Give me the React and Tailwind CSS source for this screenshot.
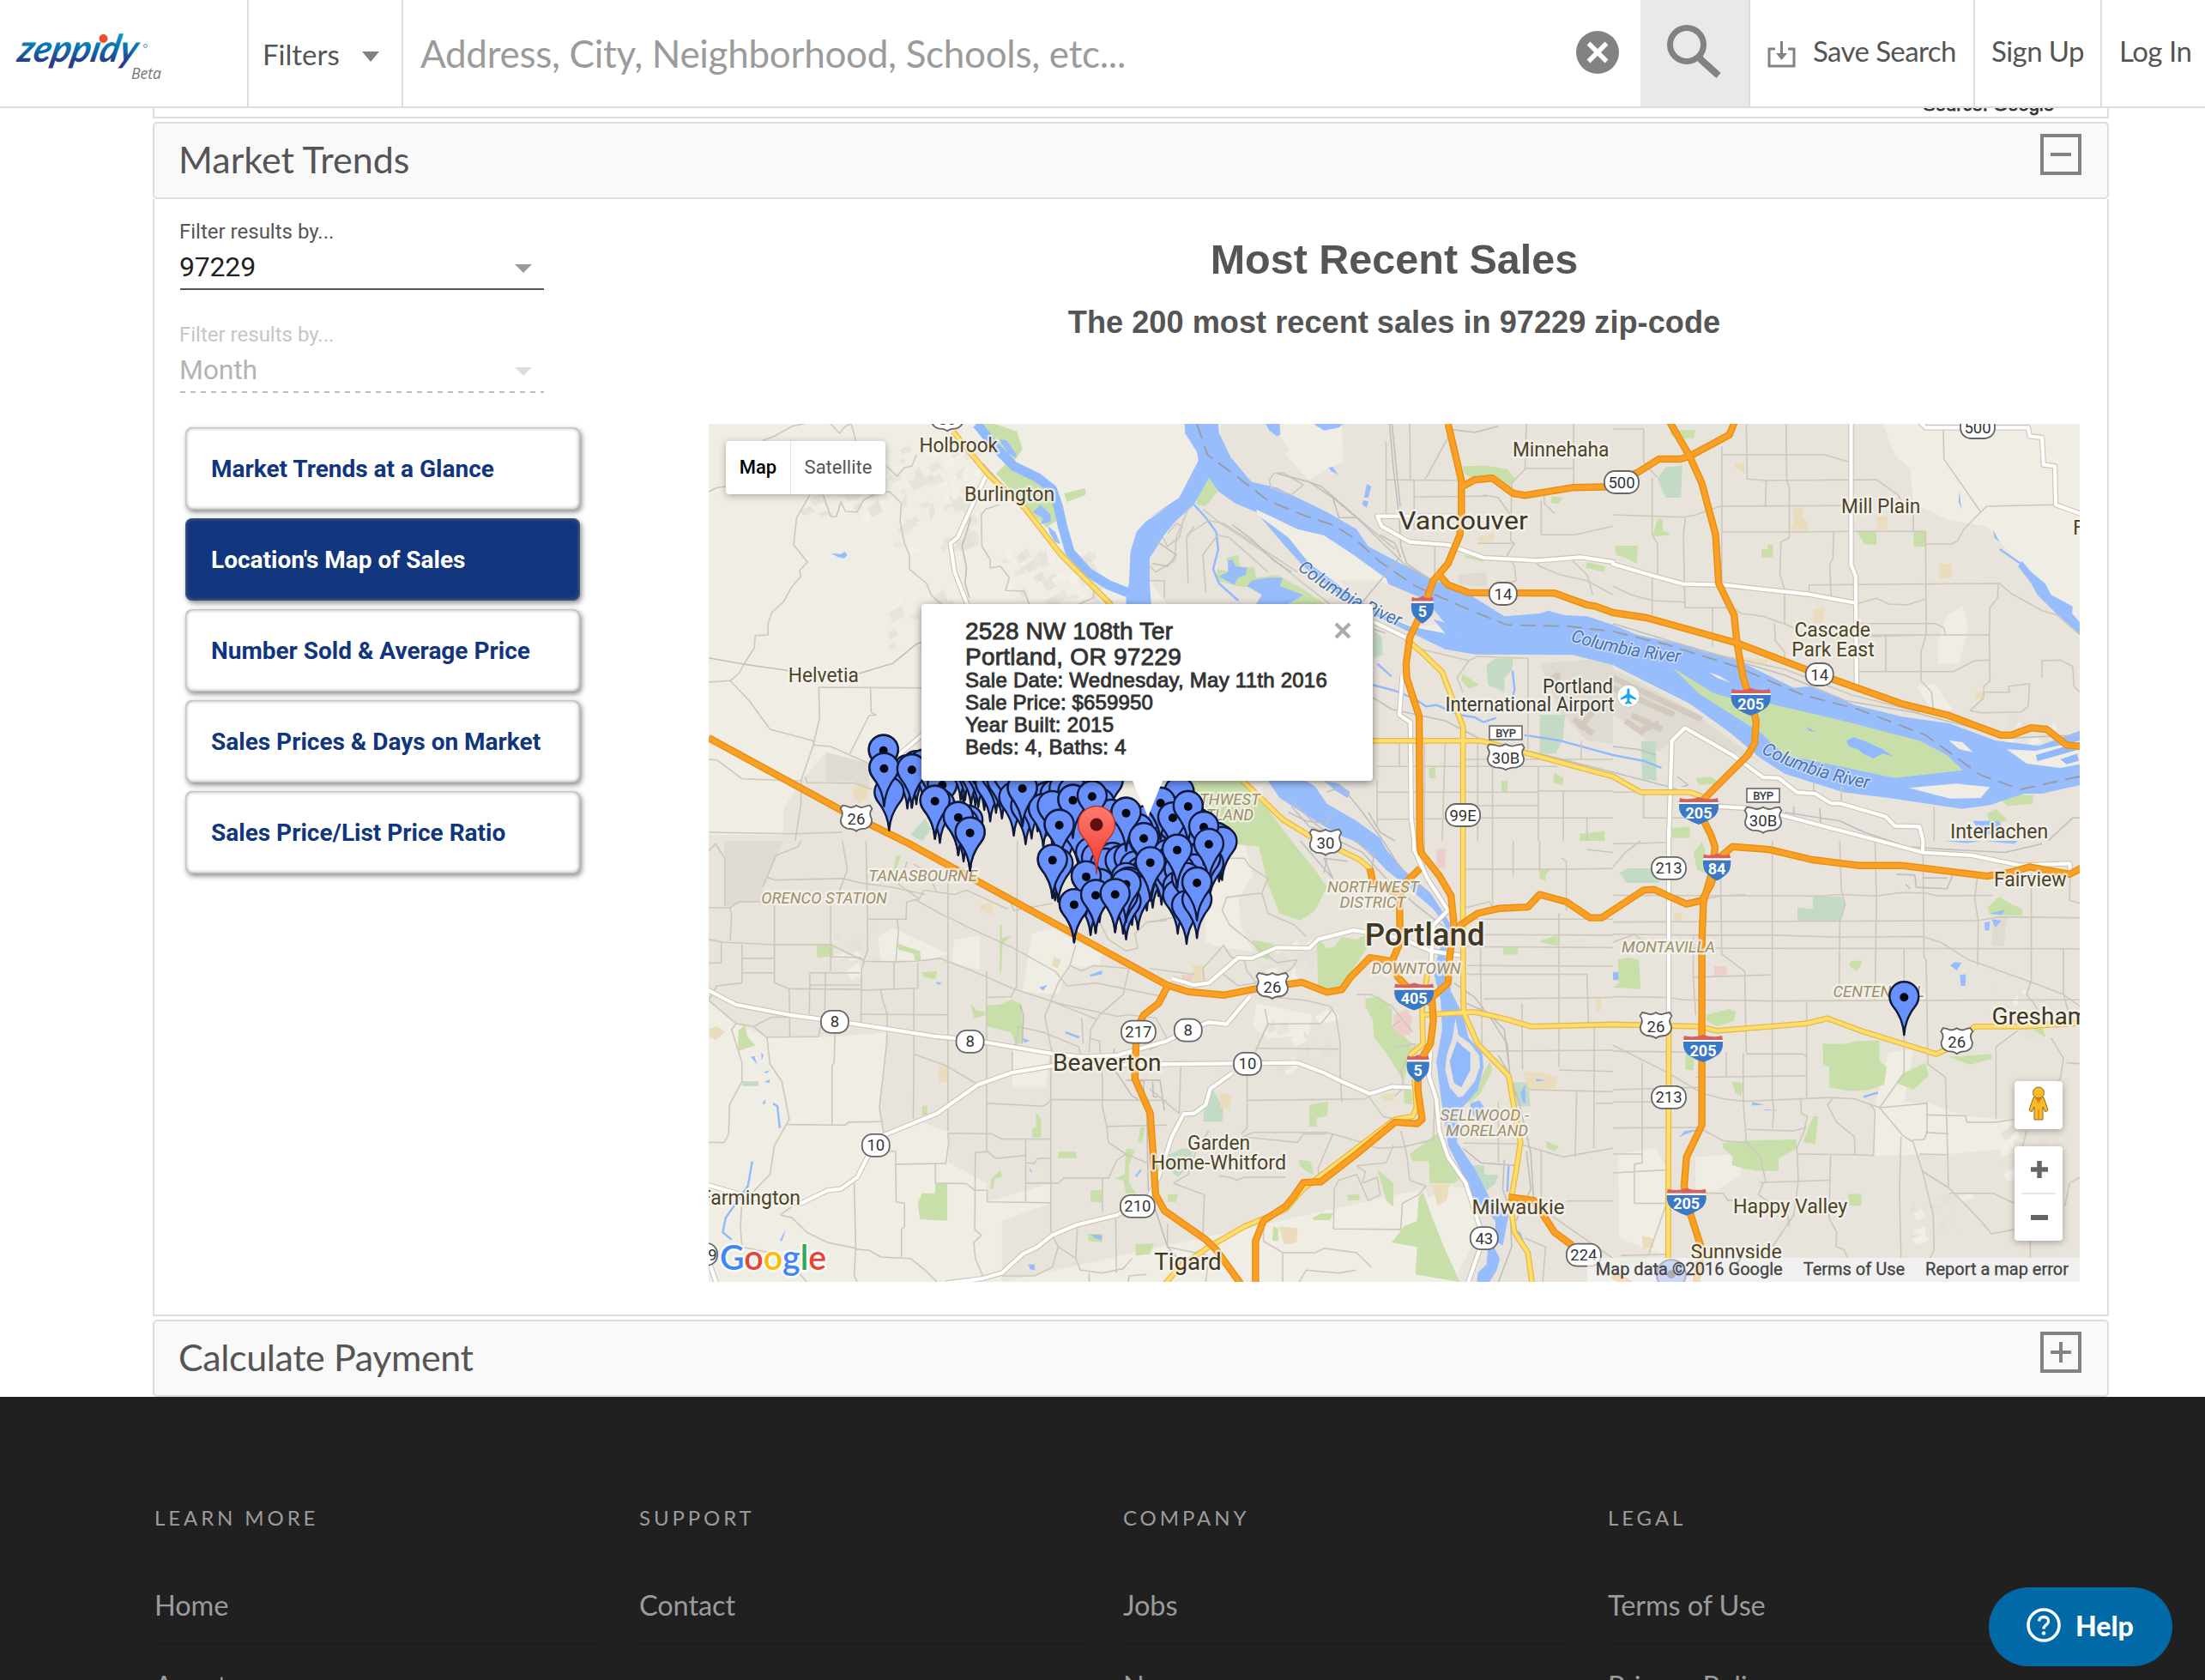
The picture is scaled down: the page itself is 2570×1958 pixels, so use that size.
import React from "react";

/* ---------- Map geometry ----------
   Map features are digitised on six survey sheets (A–C north row, D–F south row).
   Each sheet has its own origin and scale; "A 10,20 30,40" is a run on sheet A. */
const SHEETS = {
  A: [-6, -14, 2.9037, 3],
  B: [514, -14, 2.9037, 3],
  C: [1054, -14, 2.8, 3],
  D: [-6, 486, 2.9037, 2.9585],
  E: [514, 486, 2.9037, 2.9585],
  F: [1054, 486, 2.8, 2.9585],
};
const at = (s, x, y) => {
  const [ox, oy, sx, sy] = SHEETS[s];
  return [+(ox + x / sx).toFixed(1), +(oy + y / sy).toFixed(1)];
};
const pts = (str) => {
  let s = "A";
  const out = [];
  for (const t of str.trim().split(/\s+/)) {
    if (SHEETS[t]) s = t;
    else {
      const [x, y] = t.split(",").map(Number);
      out.push(at(s, x, y).join(","));
    }
  }
  return out.join(" ");
};

const URBAN = [
  "B 240,42 410,42 470,130 560,200 650,170 650,42 C 880,42 920,150 970,200 980,320 1100,380 1220,400 1300,500 1400,640 1523,790 F 1523,1521 E 1050,1521 990,1350 930,1200 D 1010,1521 1010,1310 1175,1250 1175,1180 960,1245 960,1180 830,1110 830,1005 710,960 610,1010 595,920 620,660 440,675 215,675 110,630 17,550 17,0 A 17,1480 270,1480 270,1390 330,1290 415,1190 560,1230 B 180,1500 400,1300 A 1440,1290 1568,672 1510,590 B 0,510 90,380 150,320 230,280",
];
const RURAL = [
  "E 185,0 320,10 350,120 300,200 310,300 350,380 250,370 190,350",
  "E 360,560 550,600 540,670 400,680 350,640",
  "D 1110,320 1180,300 1260,350 1350,380 1340,430 1230,440 1200,530 1080,520",
  "D 590,330 640,300 830,390 720,420 600,415",
  "D 850,340 935,325 935,445 840,420",
  "D 1045,700 1170,735 1160,850 1045,850",
  "E 1010,1190 1070,1200 1110,1320 1080,1420 1040,1500 960,1380 930,1240",
  "F 900,730 980,720 950,900 1020,905 1090,1010 1090,1080 850,1085 850,930",
  "F 1020,900 1150,950 1300,960 1310,1060 1100,1080",
  "F 17,1080 140,1060 170,1120 170,1430 20,1370",
  "F 270,1090 400,1080 420,1150 330,1210 270,1200",
  "C 1090,710 1140,680 1160,750 1130,880 1060,880 1060,800",
  "C 990,960 1050,950 1110,1040 1050,1060",
  "B 460,150 560,42 650,42 655,175 590,205 540,240",
];
const SHADE = [
  "D 70,0 270,0 200,160 200,205 75,225",
  "A 415,1190 560,1230 560,1320 500,1290 415,1295",
  "C 0,900 60,930 250,1040 400,1160 480,1220 390,1190 235,1105 150,1190 60,1100 0,1060",
  "B 1320,880 1568,860 1568,1160 1480,1150 1390,1050",
  "B 1040,570 1140,560 1140,610 1050,605",
  "F 1240,270 1285,265 1275,365 1235,360",
];
const PARKS = [
  "A 935,42 985,42 1060,68 1080,130 1040,190 1150,235 1185,270 1195,380 1160,405 1090,330 990,215 1040,165 985,100",
  "A 1220,285 1293,267 1293,290 1230,315",
  "B 200,228 232,275 190,330 158,325 165,260",
  "B 258,510 300,500 305,540 355,545 360,580 430,570 520,620 595,672 480,672 400,620 300,610 225,590 230,550 275,560",
  "B 1060,190 1140,188 1210,200 1238,235 1215,265 1160,235 1100,240 1065,215",
  "B 1360,295 1398,300 1380,322 1358,318",
  "B 1480,525 1540,540 1540,560 1475,545",
  "B 1060,500 1130,515 1130,525 1070,510",
  "B 1058,915 1115,955 1080,968 1055,940",
  "B 945,1245 967,1242 967,1282 947,1280",
  "B 1370,1260 1400,1280 1400,1305 1365,1295",
  "B 1190,1290 1212,1290 1210,1330 1190,1328",
  "B 1455,1475 1540,1465 1540,1500 1455,1500",
  "B 100,1290 310,1290 400,1390 480,1500 E 560,100 600,160 560,240 510,275 440,250 400,150 370,20 B 180,1500 180,1400",
  "C 185,65 268,63 265,90 230,95 190,85",
  "C 145,375 162,375 162,415 185,425 180,432 130,435",
  "C 5,468 80,468 78,530 40,510 10,500",
  "C 505,465 522,465 522,508 485,510 485,480 505,480",
  "C 797,420 860,418 860,465 820,462",
  "C 980,420 1020,418 1020,470 982,472",
  "C 1260,1355 1300,1338 1372,1340 1368,1370 1290,1378",
  "C 1220,1405 1250,1388 1290,1430 1230,1440",
  "C 190,1455 250,1450 250,1490 195,1490",
  "C 270,1280 320,1275 350,1300 280,1305",
  "D 383,360 440,357 438,398 385,402",
  "D 655,352 680,362 733,380 735,412 715,412 712,390 660,375",
  "D 1003,290 1010,290 1010,335 1045,325 1012,355 1008,450 1002,450",
  "D 958,565 1000,565 1045,547 1078,565 1080,690 1060,705 1040,660 958,640",
  "D 905,563 925,585 955,590 950,603 915,612",
  "D 118,655 140,635 148,675 175,705 117,725",
  "D 740,453 790,450 785,478 745,470",
  "D 785,1183 825,1183 825,1310 732,1305 725,1250 740,1215 783,1215",
  "D 740,913 757,913 757,945 740,945",
  "D 1113,990 1125,985 1125,935 1143,960 1143,1022 1113,1022",
  "D 1200,1072 1262,1072 1262,1094 1200,1094",
  "D 1310,1205 1348,1205 1348,1247 1310,1245",
  "D 1300,1355 1350,1355 1350,1385 1305,1380",
  "D 1462,1390 1525,1388 1510,1425 1462,1430",
  "D 1430,1060 1460,1065 1440,1120 1440,1180 1465,1215 1430,1215 1420,1170 1390,1165 1425,1150",
  "D 1478,988 1495,985 1485,1040 1470,1040",
  "D 975,1165 1005,1135 1010,1160 985,1165 980,1200 970,1200",
  "D 650,50 668,50 655,90 635,120 648,80",
  "E 565,330 600,370 625,365 650,330 700,340 740,320 735,370 690,440 650,505 570,512",
  "E 730,545 775,535 820,580 820,640 890,700 880,740 860,830 800,730 760,680 755,620 730,570",
  "E 540,910 605,900 600,950 565,955 565,985 540,985",
  "E 880,1080 985,1000 1010,1080 1065,1150 1030,1180 948,1180 945,1105 890,1105",
  "E 770,1130 825,1180 825,1262 800,1240",
  "E 925,1210 960,1310 1000,1410 1050,1521 900,1495 905,1400 820,1385 860,1330 905,1310 910,1230",
  "E 1150,760 1160,790 1120,870 1090,900 1060,905 1110,840",
  "E 550,1300 580,1285 622,1285 610,1308 555,1308",
  "E 670,1220 710,1218 710,1240 672,1240",
  "E 505,1100 545,1105 555,1152 530,1140 508,1120",
  "E 1320,100 1360,97 1340,115 1340,138 1320,130",
  "E 1320,345 1380,325 1382,362 1330,352",
  "E 1195,368 1247,370 1245,392 1197,392",
  "E 1340,1035 1385,1055 1370,1070 1345,1060",
  "E 345,342 420,355 400,410 375,400",
  "E 418,1330 435,1335 435,1380 415,1378",
  "E 60,1220 95,1218 90,1245 62,1245",
  "E 860,860 885,855 890,910 862,905",
  "F 15,410 50,402 85,410 90,512 0,505 20,490",
  "F 305,600 380,580 402,590 395,620 340,640 305,620",
  "F 685,700 760,700 800,690 870,688 870,760 893,780 885,840 830,860 768,862 706,850 706,780 686,770",
  "F 950,800 1020,765 1030,810 980,858 925,835",
  "F 1095,745 1235,735 1235,752 1165,772",
  "F 388,830 425,835 418,880 400,870",
  "F 437,1033 598,1030 600,1060 540,1095 540,1138 478,1138 430,1130 388,1118 390,1090 360,1060 358,1042",
  "F 655,950 670,950 660,1045 620,1040 640,980",
  "F 768,1217 810,1217 810,1258 770,1258",
  "F 1222,230 1260,192 1295,215 1335,235 1335,258 1230,255",
  "F 775,415 810,412 810,430 795,450 772,430",
  "F 1370,650 1400,635 1412,678",
  "F 237,730 265,750 262,790 237,790",
  "F 262,40 290,5 300,30 300,110 275,100",
  "F 0,1445 90,1440 125,1460 30,1460",
];
const GREEN2 = [
  "C 145,235 170,195 226,187 222,300 172,300",
  "B 1140,885 1170,862 1230,862 1225,905 1200,930 1200,980 1145,955",
  "B 1320,1060 1405,1060 1400,1140 1375,1195 1320,1195",
  "B 756,765 785,785 790,850 758,860",
  "C 92,1150 140,1155 142,1290 95,1285",
  "D 132,828 187,830 185,846 130,845",
  "E 215,858 250,925 245,968 180,968 185,925",
  "E 60,1085 110,1060 145,1065 140,1120 95,1158 60,1130",
  "E 1230,830 1282,835 1288,915 1232,915",
  "E 1082,1120 1130,1118 1135,1150 1180,1152 1170,1182 1135,1210 1110,1200",
  "F 652,192 748,192 758,220 742,276 602,276 602,230 652,235",
  "F 20,110 48,95 148,95 150,145 45,145",
  "A 750,1420 770,1460 740,1500 700,1480",
];
const PATCHES = [
  ["#e9ddbe", "A 505,1310 558,1305 555,1345 530,1372 505,1345"],
  ["#e9ddbe", "D 17,650 45,638 73,660 40,688 20,675"],
  ["#e9ddbe", "D 935,218 982,215 975,255 938,240"],
  ["#e9ddbe", "D 1185,400 1210,408 1200,440 1178,430"],
  ["#e9ddbe", "D 793,780 825,778 825,832 797,830"],
  ["#e9ddbe", "C 587,332 620,330 620,370 637,385 635,415 578,415 590,385"],
  ["#e9ddbe", "C 862,366 895,366 895,412 862,412"],
  ["#e9ddbe", "C 1064,532 1105,530 1105,583 1065,583"],
  ["#e9ddbe", "C 652,692 692,680 685,735 652,740"],
  ["#e9ddbe", "C 398,180 430,178 430,215 398,195"],
  ["#e9ddbe", "C 1180,980 1207,977 1210,1003 1182,1005"],
  ["#e9ddbe", "C 420,860 510,865 500,885 450,880"],
  ["#e9ddbe", "E 145,430 186,428 186,485 147,485"],
  ["#e9ddbe", "E 235,868 277,875 270,930 240,920"],
  ["#e9ddbe", "E 787,875 828,872 828,895 787,897"],
  ["#e9ddbe", "E 1262,795 1320,797 1378,815 1375,855 1285,858"],
  ["#e9ddbe", "E 438,1330 500,1335 498,1385 455,1392"],
  ["#e9ddbe", "E 955,1185 1015,1183 1005,1240 975,1260"],
  ["#e9ddbe", "E 1508,545 1528,542 1528,585 1510,587"],
  ["#e9ddbe", "F 197,247 225,247 225,276 197,276"],
  ["#e9ddbe", "F 95,1360 133,1372 130,1402 97,1405"],
  ["#e9ddbe", "B 1110,440 1168,420 1165,450 1120,460"],
  ["#eccfcb", "E 825,600 870,580 890,610 880,670 850,672 825,640"],
  ["#eccfcb", "E 970,30 1002,25 1000,98 972,90"],
  ["#eccfcb", "E 107,462 148,460 145,485 110,480"],
  ["#eccfcb", "F 330,432 368,432 375,460 330,465"],
];
const WATER = [
  "B 232,42 235,75 275,160 345,245 430,265 600,350 700,410 740,470 830,520 960,590 1050,610 1100,650 1200,715 1320,705 1350,695 1400,710 1480,715 1568,745 C 80,780 250,820 400,865 590,965 640,960 700,985 790,1025 940,1065 1100,1090 1250,1150 1390,1168 1523,1115 1523,1305 1400,1335 1340,1335 1230,1375 1140,1388 900,1350 750,1330 560,1265 480,1210 380,1120 250,1020 120,950 0,885 B 1430,850 1100,848 1000,830 900,780 760,710 640,640 520,540 450,460 360,350 290,320 235,280 200,230 150,325 90,380 50,430 20,480 0,510 A 1510,600 1515,672 1430,672 1430,640 1440,600 1445,490 1465,420 1495,385 1568,335 B 0,370 100,300 165,170 160,140 120,75 118,42",
  "B 400,1290 440,1350 530,1410 640,1480 E 690,0 740,35 800,100 880,165 960,235 1000,290 980,380 960,450 985,550 990,650 970,760 985,880 1000,980 1010,1050 1050,1130 1100,1240 1170,1310 1170,1380 1195,1395 1215,1290 1150,1230 1100,1130 1040,1040 1050,930 1110,860 1130,780 1125,730 1080,680 1060,600 1020,520 1000,400 1020,290 950,180 860,100 800,30 B 780,1490 700,1430 600,1370 560,1310 530,1290",
  "E 1165,1400 1185,1440 1175,1480 1150,1521 1108,1521 1110,1490 1140,1460 1145,1400",
  "A 432,495 465,497 478,488 487,502 475,512 455,508",
  "A 1115,350 1140,325 1175,360 1175,385 1140,392 1150,372",
  "A 1165,400 1190,420 1208,462 1190,455 1172,425",
  "A 1000,95 1025,100 1060,150 1055,160 1030,145",
  "B 392,42 440,42 442,80 430,85 405,65",
  "B 555,42 655,42 640,55 590,65",
  "B 735,252 750,262 740,300 725,300",
  "B 722,310 740,312 735,335 720,325",
  "B 265,520 280,515 290,540 330,545 325,570 300,580 285,605 260,590 235,575 265,560",
  "B 345,590 400,580 450,580 440,610 520,640 470,672 360,672 380,640 330,610",
  "B 605,195 620,192 638,220 615,208",
  "B 590,1290 640,1300 678,1330 670,1350 630,1325",
  "C 1322,540 1335,522 1365,560 1410,600 1430,640 1500,680 1498,705 1523,735 1523,778 1470,730 1385,640 1365,600",
  "C 1240,412 1262,455 1245,440",
  "C 1130,275 1137,340 1128,315",
  "C 1175,1430 1260,1430 1280,1470 1200,1480",
  "F 1100,430 1115,418 1138,420 1122,447",
  "F 1132,462 1152,460 1150,500 1135,500",
  "F 1230,250 1278,238 1270,255",
  "F 1212,282 1230,278 1228,308 1214,310",
  "F 1235,270 1268,275 1248,298",
  "F 0,452 18,452 18,480 0,480",
  "F 453,900 492,910 455,913",
  "F 488,925 540,930 500,930",
  "F 215,1022 235,1000 285,995 240,1010",
  "F 1080,0 1200,0 1155,8",
  "F 1210,0 1320,0 1310,10",
  "D 1136,505 1163,497 1150,517",
  "D 1307,462 1350,447 1348,460 1310,468",
  "D 785,487 808,488 795,497",
  "D 160,745 172,742 182,772",
  "D 195,730 203,740 197,757",
  "D 203,798 225,790 215,802",
  "D 205,832 225,822 222,834",
  "D 198,905 210,890 208,908",
  "D 258,1378 277,1340 272,1360 265,1382",
  "D 1460,1155 1482,1128 1480,1140 1465,1160",
  "D 1310,1357 1350,1360 1345,1377 1325,1370",
  "D 1100,1460 1120,1460 1122,1480 1105,1478",
  "D 1080,680 1105,690 1085,695",
  "D 1103,1125 1113,1145 1105,1140",
  "E 1085,905 1115,895 1130,915 1120,970 1085,935",
  "E 1255,870 1270,840 1272,905 1262,900",
  "E 1307,820 1340,825 1310,830",
  "E 1238,1340 1255,1350 1268,1385 1250,1370",
];
const ISLANDS = [
  ["#f0ede4", "B 362,342 430,375 500,410 590,432 690,500 800,582 810,610 870,632 930,655 1000,740 1055,770 1000,775 880,750 800,715 700,655 620,590 540,530 470,440 362,358"],
  ["#e8e4dc", "B 640,590 780,590 930,655 1000,740 900,752 800,712 700,655"],
  ["#97bdfd", "B 960,725 1050,752 1055,800 1080,775 1160,812 1040,818 1000,775"],
  ["#c9dfaa", "C 195,895 330,985 420,1010 510,1020 750,1080 1000,1150 1090,1200 1142,1253 920,1280 740,1240 560,1200 480,1120 420,1080 280,985"],
  ["#f0ede4", "C 965,1315 1120,1300 1230,1312 1200,1350 1100,1352"],
  ["#f0ede4", "C 1095,1148 1140,1155 1175,1190 1130,1180"],
  ["#f0ede4", "C 1285,1180 1380,1185 1523,1150 1523,1232 1460,1245 1350,1230"],
  ["#f0ede4", "C 312,910 350,925 385,948 340,930"],
  ["#e8e4dc", "E 1035,612 1045,670 1065,685 1085,700 1115,740 1118,780 1100,830 1060,880 1045,885 1015,850 1000,790 1005,740 1025,680"],
  ["#91b9fe", "E 1040,690 1060,710 1085,730 1085,790 1055,850 1030,835 1015,760"],
  ["#91b9fe", "C 762,1150 785,1137 830,1155 880,1180 915,1205 880,1195 850,1212 815,1195 800,1180 770,1170"],
  ["#91b9fe", "C 630,1102 665,1120 640,1115"],
  ["#91b9fe", "C 1380,1200 1523,1155 1523,1180 1385,1222"],
  ["#91b9fe", "C 1460,1215 1515,1195 1520,1220 1480,1232"],
];
const STREAMS = [
  "A 925,42 985,120 1050,190 1130,230 1180,270 1200,330 1215,400 1240,490 1300,560 1370,605 1435,632",
];
const CREEKS = [
  "B 150,325 190,370 225,420 232,480 215,550 235,600 300,660",
  "B 756,955 830,975 900,1005 935,1030 970,1025 1050,1060 1100,1068 1130,1085 1172,1070",
  "B 1228,905 1235,970 1225,1010 1200,1022",
  "B 1268,1130 1390,1150 1568,1200 C 100,1220 158,1245",
  "B 770,880 818,925",
  "D 235,905 250,915 258,990",
  "D 165,1105 150,1190 75,1300 65,1350 95,1375",
  "D 1225,660 1272,678",
  "C 1262,480 1330,530",
  "E 1215,1120 1210,1210",
  "F 818,883 865,868",
];

const ORANGE = [
  "A 17,1140 470,1395 690,1507 D 1568,497 E 130,520 250,532 360,510 515,488 600,522 650,513 680,470 745,403 820,415",
  "B 1010,42 1030,130 1055,240 1055,360 1050,430 1010,530 960,590 925,690 880,790 868,880 870,930 912,1065 914,1500 E 918,40 980,120 1020,190 1030,290 1015,400 1010,490 955,540 960,620 950,700 908,770 908,860 922,960 905,975 830,970 700,1080 580,1175 520,1178 485,1230 460,1260 385,1310 358,1380 358,1530",
  "D 1568,505 1540,560 1490,600 1465,650 1460,820 1512,940 1520,1060 1530,1220 1560,1275 E 190,1375 225,1410 310,1530",
  "E 915,95 860,150 845,200 848,350 820,415 840,470 895,530 955,560",
  "E 745,95 755,140 845,185",
  "E 1045,295 1110,250 1180,233 1280,228 1320,185 1410,210 1490,265 1530,265 F 0,240 100,170 135,168 180,190 240,218 290,205 320,150 345,60 390,20 510,30 650,65 800,85 940,85 1060,100 1220,122 1290,110 1360,90 1490,115 1530,93",
  "C 185,35 250,155 290,250 335,430 345,600 395,710 405,810 425,930 450,1010 467,1080 462,1160 440,1200 300,1350 280,1395 320,1480 F 333,20 325,100 295,210 290,350 290,980 240,1090 232,1190 245,1260 290,1410 270,1530",
  "B 1057,262 1100,238 1160,232 1230,285 1270,292 1430,265 1568,262 C 0,250 80,212 150,165 220,165 250,155 380,80 397,35",
  "B 970,560 1010,605 1080,632 1370,634 1480,675 1510,680 1568,702 C 110,720 410,810 640,905 940,1020 1090,1060 1265,1130 1300,1130 1365,1105 1415,1110 1480,1165 1530,1170",
  "E 1215,1228 1300,1240 1370,1350 1430,1395",
  "F 0,1497 60,1530",
];
const YELLOW = [
  "A 845,70 960,215 1090,340 1150,420 1210,500 1380,675",
  "B 315,1290 450,1425 545,1485 E 650,35 710,65 745,95",
  "B 750,1150 1120,1150 1265,1190 1440,1240 1568,1275 C 90,1330 250,1330 290,1345",
  "B 868,795 920,840 990,910 1060,1100 1060,1500 E 1060,300 1062,590 1110,700 1215,810 1235,930 1255,1040 1240,1140 1220,1250 1235,1350 1280,1420 1295,1530",
  "E 925,600 1100,590 1190,610 1290,640 1568,633 F 280,640 340,655 630,630 700,612 810,655 1055,735 1120,705 1180,640 1340,640 1530,628",
  "F 182,650 180,1440",
  "E 940,460 922,580 925,700 880,740",
  "E 50,1530 100,1470 200,1400 320,1330 460,1270 520,1200 830,960 890,950 903,920 896,820",
];
const WHITE = [
  "A 955,225 890,370 860,440 835,460 850,560 892,672",
  "A 655,1205 745,1125",
  "D 10,512 110,565 290,600 440,620 570,640 790,675 900,685 1185,735 1280,745 1400,740 1568,690 E 130,653 200,625 260,632 340,535",
  "D 10,1185 160,1230 330,1250 420,1205 465,1200 520,1160 560,1080 610,1015 790,940 930,840 1040,800 1185,775 1568,770",
  "E 40,770 500,765 590,800 650,830 745,872 820,848 885,850",
  "E 280,800 205,855 190,910 150,940 115,942 75,1020 30,1160 0,1220",
  "D 820,1525 940,1510 1010,1490 1080,1425 1130,1400 1180,1360 1260,1325 1400,1290 1520,1215",
  "E 75,475 150,497 200,490 300,403 345,405 430,368 540,370 570,340 690,308 850,335 950,380 1050,395",
  "B 870,790 760,735",
  "B 1055,365 770,365 785,400 880,455 1010,465 1130,510 1310,520 1460,508 1568,525 C 0,532 120,570 230,602 360,605 640,638 790,668",
  "C 777,42 777,535 792,575 795,955",
  "C 1000,35 1020,55 1355,55 1360,85 1400,90 1405,185 1442,190 1445,325 1530,358",
  "B 855,920 845,1060 882,1085 885,1420 895,1500 E 895,30 940,130 1010,240 960,290 950,460",
  "E 950,720 945,810 970,890 980,1000 1010,1090 1070,1180 1110,1310 1130,1370 1075,1530",
  "C 182,1500 192,1150 235,1105 390,1200 490,1278 540,1280 600,1330 660,1335 710,1368 745,1370 890,1415 920,1448 1000,1450 1012,1500 F 1010,40",
  "F 182,-40 182,600",
  "C 345,1380 430,1385 550,1410 870,1500 F 1010,40 1170,50 1330,85 1490,78 1492,110",
  "D 15,1440 45,1530",
];
const LOCAL = [
  "A 17,280 45,265 75,262", "A 200,100 240,85 300,50 340,42", "A 430,42 460,75 480,50 500,42 515,100",
  "A 405,290 430,365 450,365 465,315 480,348 520,350 540,310 590,280 630,280 670,320 665,380 680,460 697,500 697,550 755,600 770,640 805,672",
  "A 360,290 315,370 305,465 352,525 325,555 330,575 300,610 270,665 232,700 218,740 218,780 175,782 172,825 135,885 120,915 90,940 17,945",
  "A 90,940 155,1010 225,1110 370,1150 375,1165 430,1170 560,1230", "A 738,965 390,963 393,1070 370,1170 330,1290 330,1370 310,1500",
  "A 565,965 567,1050 583,1060 560,1062 495,1195", "A 17,1215 45,1217 130,1283 330,1290", "A 345,1275 350,1297 510,1298 570,1320",
  "A 1000,325 955,340 940,360 942,470 970,515 970,545 1005,540 1035,580 1022,625 1085,627 1102,672", "A 1320,610 1320,650 1270,672",
  "A 620,190 655,225 680,195 705,190 720,150", "A 17,1470 300,1475 470,1470",
  "B 180,340 240,390 300,430 400,500 520,600 610,672", "B 125,430 200,380 250,390 500,560",
  "B 60,425 90,390 110,400 100,440 60,470 45,440", "B 130,340 90,440 85,520 20,560 0,540", "B 190,630 180,500 230,430 270,440 400,560",
  "B 130,600 125,440 150,400", "B 0,590 50,590 50,650", "B 405,240 420,215 450,212 520,255 480,290 410,265 405,240",
  "B 800,105 800,365", "B 880,42 882,238", "B 895,238 895,410 960,400", "B 800,238 1055,240", "B 895,298 1140,295", "B 1015,42 1010,90 930,240",
  "B 1275,42 1270,200 1225,250 1222,450 1235,460 1210,500 1235,540 1240,590 1210,600", "B 1220,360 1180,300 1130,290", "B 1435,42 1435,265",
  "B 1270,197 1435,197", "B 1325,310 1325,430", "B 1325,430 1440,430 1568,400", "B 1110,460 1230,460", "B 965,470 965,570", "B 1300,520 1320,540 1390,570 1480,590 1568,640",
  "B 1335,280 1335,320 1370,355", "B 1430,520 1480,570 1500,640",
  "C 100,60 100,175 145,230", "C 0,60 100,60", "C 128,230 128,430 145,460 145,570", "C 355,120 355,590", "C 355,150 690,150 770,175", "C 435,42 438,235 500,240 860,237 930,290 940,310",
  "C 565,42 567,240 575,265 575,440 548,455 545,570 560,620 560,740", "C 500,240 497,328", "C 0,360 230,368 270,360 350,330 777,328", "C 355,420 575,420 800,418 1020,418",
  "C 237,368 230,430 235,685 380,685", "C 720,420 718,510 707,535 712,645", "C 640,640 640,605 1260,600 1300,635 1400,695 1450,710 1523,780", "C 1020,420 1022,780 1005,840 1005,940 1040,980 1045,1040",
  "C 1020,462 1105,462 1125,450 1145,410 1200,350 1220,330 1440,325", "C 1078,60 1080,165 1200,350", "C 980,330 980,418", "C 800,670 860,652 900,672 960,675 1020,655", "C 795,740 1050,740 1080,755 1085,780",
  "C 797,780 1228,780 1230,685 1255,650 1258,600", "C 1228,780 1230,940 1210,960 1210,1000 1165,1045 1200,1052 1330,1050 1355,1030 1360,950 1290,960 1295,980 1210,980", "C 795,908 1110,908 1180,870 1230,868",
  "C 890,780 890,908", "C 1400,930 1400,870 1460,868 1500,890 1505,960 1523,980", "C 128,570 128,710", "C 325,685 325,820", "C 380,680 420,705 490,715 560,742 590,755", "C 527,740 530,800 560,840 560,870",
  "C 0,610 60,640 130,660 235,665", "C 710,790 1020,780", "C 0,1330 90,1330", "C 100,1330 100,1420 300,1420", "C 655,1295 655,1335", "C 745,1310 745,1370", "C 1048,1380 1048,1500", "C 250,820 300,840 560,900 780,990 1000,1050",
  "B 770,1240 1380,1240", "B 770,1330 1315,1330", "B 770,1425 1060,1422", "B 1060,1377 1315,1377", "B 1070,1215 1568,1215", "B 845,1150 845,1240", "B 930,1160 930,1500", "B 1000,1160 990,1500", "B 1110,1160 1110,1500", "B 1160,1240 1160,1500",
  "B 1315,1240 1315,1500", "B 1568,1325 1315,1325", "B 1060,1420 1568,1420", "B 770,1290 770,1450", "B 1400,1325 1400,1500", "B 1460,1150 1460,1215", "B 920,830 1080,870 1110,855 1280,862 1280,1180", "B 1080,870 1040,930 1060,980", "B 1480,1420 1480,1500",
  "E 930,0 930,90", "E 1160,0 1160,230", "E 1230,0 1230,120", "E 1320,0 1320,110", "E 1385,250 1385,780", "E 1480,460 1485,640", "E 1070,98 1400,98 1568,95", "E 1070,270 1568,270", "E 1070,323 1568,325", "E 1075,365 1568,368", "E 1075,430 1568,432",
  "E 1075,460 1480,460", "E 1130,545 1568,540", "E 1120,300 1120,440 1125,700", "E 1130,725 1568,722", "E 1260,560 1262,790", "E 1285,858 1568,865", "E 1385,790 1568,795", "E 1505,640 1503,1060", "E 1568,905 1510,905", "E 1060,1042 1250,1045 1400,1090 1568,1060",
  "E 1180,900 1180,1110", "E 1445,865 1440,1090", "E 1325,1065 1325,1250", "E 1410,1242 1568,1242", "E 1395,60 1410,70 1410,240", "E 1070,230 1150,210 1160,230", "E 1300,1250 1568,1440", "E 1270,1370 1340,1400 1330,1521", "E 1480,30 1568,40",
  "E 0,280 100,260", "E 185,480 180,440 250,360 275,400 320,410 330,450 360,490 300,500 250,460", "E 245,240 260,195 380,180 400,130 340,90 320,60 260,60", "E 245,240 270,290 345,350 430,420 500,410 480,440 450,460", "E 0,440 150,460",
  "E 380,180 400,250 490,290 530,330", "E 430,540 530,550 610,570 630,600 645,700 645,830", "E 620,580 580,630 400,632 330,790 330,990 310,1010", "E 360,715 640,718", "E 390,580 400,630 360,720", "E 330,895 730,890 740,880", "E 645,810 650,900", "E 740,880 790,950 830,960",
  "E 230,1060 350,1005 600,1005 720,1040 770,1060 860,1055 960,1030 965,880 945,830", "E 310,1020 500,1040 520,1010 600,1010", "E 620,1010 570,1130 575,1180", "E 235,1155 270,1160 295,1170 320,1160 460,1160", "E 700,1120 730,1140 720,1180 770,1160 780,1220 740,1240 700,1150 640,1170 625,1200 622,1338 850,1340 855,1250 910,1220 935,1190 880,1170 870,1080 850,1000",
  "E 700,1120 800,1110 825,1050", "E 0,855 100,940 105,780", "E 80,1180 185,1220 180,1360", "E 80,1180 130,1150 160,1060 200,1000", "E 385,1310 385,1380 450,1420 560,1420 590,1405 700,1420 750,1470", "E 450,1420 450,1521", "E 60,1320 60,1400 200,1430 190,1521", "E 500,1530 530,1480 640,1490 700,1480", "E 830,710 900,700 850,790 860,850 830,880",
  "E 700,530 750,530 820,570 890,660", "E 850,620 820,640", "E 0,720 40,700",
  "D 17,340 70,350 240,358 430,357 545,415 640,417 720,415 800,405 910,448 1050,510 1200,560 1400,605 1440,600", "D 130,358 130,490 45,500 17,550", "D 130,405 240,405", "D 130,455 240,455", "D 240,225 240,490 290,510 530,512", "D 235,220 240,225", "D 430,200 430,450", "D 430,400 530,402 545,415 535,440 533,625",
  "D 360,455 530,455", "D 360,455 358,600", "D 413,455 410,600", "D 360,497 530,497", "D 290,510 292,675", "D 533,515 725,508 725,420", "D 645,417 645,508", "D 600,515 605,545 622,600 620,700 595,920 610,1010", "D 712,510 712,735 710,960", "D 827,100 827,1000",
  "D 533,598 827,600", "D 712,735 820,775 920,835", "D 958,450 958,1070", "D 958,540 1040,538 1060,500 1062,0", "D 827,262 900,300 1050,370 1190,450 1230,500 1330,490 1568,540", "D 720,205 827,265", "D 555,270 685,270 688,210 730,200 745,170 850,185 890,170 1030,235", "D 655,270 660,310 650,420",
  "D 215,125 240,135 470,130 530,145 640,160 750,185", "D 200,160 215,125 245,50 320,20 330,0", "D 470,0 487,100 450,200", "D 550,0 555,270 555,380 540,420", "D 660,150 730,200", "D 690,70 660,150", "D 710,80 760,110 790,180", "D 17,230 90,230 95,260 90,345", "D 17,35 40,10 72,60 72,225",
  "D 240,220 205,210 120,210 90,230", "D 60,350 60,420 17,422", "D 292,608 230,608 170,640", "D 110,630 95,650 130,765 130,830 88,910 85,1010 70,1040 17,1040", "D 17,550 110,630 170,640 215,680 225,770 265,830 290,960 240,1050 225,1150 130,1250 125,1330 130,1400 270,1430 350,1521", "D 215,677 390,675 395,640", "D 445,660 442,765 435,775 435,980",
  "D 280,978 480,980 490,970 600,968", "D 260,1290 300,1300 350,1350 420,1385 515,1405", "D 260,1290 300,1260", "D 510,1180 515,1400 510,1500 520,1521", "D 515,1408 560,1412 600,1435 700,1440 750,1480 790,1521", "D 650,1070 652,1245 680,1250 680,1330 670,1340 670,1435", "D 630,1070 650,1070", "D 652,1115 820,1112 830,1040 827,1005",
  "D 785,1115 785,1180 890,1182 918,1205 960,1205 960,1245 1175,1248", "D 827,1008 975,1010 1010,1028 1175,1028", "D 958,1070 990,1095 1090,1085", "D 920,1075 958,1072", "D 920,1075 918,1340 940,1360 915,1385 920,1440 945,1500", "D 1090,1030 1090,1245", "D 1175,740 1175,1350", "D 958,905 1150,915 1180,892 1568,895", "D 1365,985 1568,980",
  "D 1350,820 1350,920 1365,985 1370,1040 1430,1080 1500,1110", "D 1090,1110 1120,1112 1130,1095 1175,1095", "D 1090,1180 1200,1180 1220,1163 1370,1163 1400,1100 1430,1080", "D 1350,1165 1350,1280", "D 1265,1330 1260,1440 1275,1480 1350,1490 1420,1475 1450,1440", "D 1395,1300 1397,1490", "D 1180,1360 1200,1400 1180,1470 1120,1500 1010,1500", "D 1200,1400 1260,1440",
  "D 1260,360 1240,430 1200,490 1155,605 1180,735", "D 1340,280 1370,340 1430,380 1470,370 1460,320 1500,280 1568,275", "D 1240,430 1280,448 1320,430 1440,440 1420,530 1340,600 1310,650 1305,730", "D 1170,550 1330,615", "D 1060,640 1150,660 1270,710 1275,735", "D 1280,610 1285,700", "D 1040,720 1060,690 1065,640", "D 1305,680 1340,690 1350,820", "D 1030,185 1050,240 1180,215", "D 1045,725 1045,790",
  "D 1440,600 1530,610 1568,680", "D 1438,1521 1440,1500 1500,1495", "D 1305,1490 1305,1521",
  "F 0,188 680,190 740,185 860,190 940,178 1020,180 1060,190 1240,188", "F 0,280 1190,275 1260,262 1523,265", "F 0,322 280,325 520,325 740,332 1010,330 1070,350 1160,410 1360,485 1470,530 1523,570", "F 240,370 1523,372", "F 0,537 180,540 230,548 520,552 1523,548", "F 0,10 100,8 182,5", "F 0,90 40,40 90,0",
  "F 350,50 355,390 430,450 435,730", "F 520,0 520,890", "F 740,0 745,170 758,220 740,280 738,550", "F 855,0 860,200 855,550", "F 950,372 950,800 910,860 870,920", "F 1012,40 1015,400 1022,410 1028,770 1085,815 1095,1195 1010,1140", "F 262,470 515,462", "F 262,330 262,470 270,600", "F 1190,120 1180,200 1192,275 1190,430",
  "F 1365,110 1365,480 1350,530 1380,570 1400,640", "F 1470,372 1470,530 1500,640", "F 1492,110 1490,205 1523,215", "F 0,705 180,800 290,870 360,890 430,898 710,885 790,890 870,920 945,1015 980,1040 1010,1140 1100,1200 1200,1310 1235,1355 1310,1340", "F 0,725 240,728", "F 270,815 632,810", "F 0,858 280,850", "F 0,900 180,900", "F 370,730 370,815", "F 425,730 425,900 435,1040 480,1090 500,1180",
  "F 632,555 632,890", "F 435,735 620,735 632,745", "F 612,890 615,940 635,950 625,990 590,1000 435,995", "F 0,990 280,988 360,1035 430,1040", "F 630,985 600,1060 605,1170 590,1290 520,1400", "F 600,1080 790,1082 850,1085 855,930 840,910", "F 790,1080 788,1020 730,970 700,910 720,885", "F 870,920 1025,905 1025,1005 1015,1030 975,1032", "F 1020,945 1150,948 1155,970 1250,970 1310,960",
  "F 710,1085 705,1300 730,1350 728,1400 755,1410 765,1440", "F 480,1178 710,1170", "F 490,1180 475,1220 570,1290 575,1330", "F 940,1020 935,1200 940,1440", "F 1010,1140 1045,1290 1048,1410 1035,1440", "F 1098,1215 1240,1215 1310,1250", "F 1000,1080 1095,1082", "F 95,765 95,1110 70,1115 70,1250 170,1250", "F 0,1145 170,1135", "F 0,1080 95,1080", "F 290,1215 360,1215 375,1240 390,1240",
  "F 175,1250 115,1430", "F 25,1430 180,1425", "F 1095,1010 1020,1005", "F 1250,960 1250,710 1320,655", "F 1430,680 1470,750 1460,820 1400,900", "F 1480,765 1523,768", "F 1335,1060 1350,1000", "F 1362,1380 1362,1440", "F 1523,1160 1490,1180 1475,1260",
  "F 0,350 70,322 100,345", "F 430,185 350,190 300,200", "F 520,890 525,930 520,990",
];
const RAIL = [
  "A 17,860 140,883 310,908", "A 525,915 640,880 720,812 740,805", "A 945,180 1050,300 1160,430 1300,590", "A 905,370 875,470 890,545 885,600 900,650",
  "B 812,42 825,200 845,370 850,470 870,530 940,580", "B 820,42 840,250 848,330", "B 430,215 540,245 620,300 700,370 800,470 870,540 960,590", "B 540,245 580,260 680,350 760,420 830,480", "B 620,300 640,370 700,370", "B 845,510 720,665", "B 1010,60 1100,72 1180,50",
  "B 280,395 350,450 420,520 480,560", "B 780,430 830,460 850,510", "B 756,1000 820,1040 1000,1080 1130,1150 1300,1190 1568,1260 C 180,1310 345,1370 430,1385", "B 20,450 90,500 60,540 10,530", "B 756,760 798,773", "B 480,1360 560,1440 640,1500 E 720,40 800,130 900,220 1000,300",
  "B 600,1330 650,1310 720,1400 790,1500 E 840,80 930,180", "B 480,1380 540,1450 620,1480", "B 470,1400 530,1430 600,1440 620,1400", "B 740,1400 780,1470 830,1500", "E 510,0 560,60 620,130 590,60 670,70", "E 600,60 590,110", "E 1030,490 1100,540 1160,620 1210,700 1220,820", "E 1050,550 1140,590 1200,650 1215,770",
  "C 0,740 150,790 400,870 560,920 760,1010 980,1050 1300,1140 1523,1130", "C 0,1170 80,1180 140,1200", "C 560,1400 740,1430 820,1470 F 960,20 1100,30 1280,40 1400,10", "C 590,1380 590,1410", "C 675,1385 678,1440", "C 210,1275 245,1305 225,1310", "C 1420,1500 1500,1420 1523,1420",
  "D 1070,565 1083,600 1078,700", "D 1390,715 1385,780 1450,880 1470,890", "D 1430,825 1545,825 1560,930", "D 1470,825 1490,830 1490,890", "D 1520,830 1522,880 1535,885", "D 1500,940 1505,1200 1545,1320 E 60,1400 130,1480", "E 1060,1060 1120,1110 1250,1120", "E 1200,1100 1195,1200 1220,1280 1225,1400 1180,1521", "E 1275,1070 1290,1200 1240,1310",
  "E 1180,740 1215,800 1250,900 1290,1080 1300,1250", "F 925,115 985,118 990,160 1090,165 1110,115", "F 955,150 970,165", "F 1010,128 1090,128", "E 700,0 760,60", "E 720,70 750,110 760,40",
];
const RUNWAYS = [
  "B 1435,1075 1500,1125", "B 1500,1045 1455,1110", "B 1340,950 1380,920 1380,970",
  "C 0,930 290,1075", "C 0,965 200,1060", "C 40,1080 100,1125", "C 60,1060 160,1110", "C 95,1110 150,1090",
];
const BORDER = "B 160,42 195,150 300,230 400,310 530,365 620,395 690,440 780,525 900,610 1100,700 1210,745 1420,750 1568,768 C 180,815 400,890 620,990 800,1040 1020,1130 1200,1270 1330,1320 1523,1275";

const PINS = (() => {
  const src =
    "A 720,1240 745,1235 770,1250 830,1250 880,1240 920,1245 960,1238 1000,1248 1040,1240 1080,1250 1120,1245 1180,1240 1230,1250 1280,1245 1340,1240 1380,1255 1370,1290 A 609,1184 705,1252 690,1255 611,1247 628,1332 808,1305 870,1225 885,1225 905,1245 930,1250 950,1260 970,1300 990,1270 1010,1290 1030,1270 1050,1350 1090,1380 1110,1360 1130,1335 1160,1350 1190,1340 1220,1320 1250,1330 1079,1317 1150,1390 1180,1380 B 100,1330 A 783,1361 800,1375 895,1430 862,1418 880,1440 902,1472 1250,1358 1315,1345 1340,1370 1380,1410 1360,1450 1204,1445 1230,1460 1270,1470 1430,1403 1450,1430 1497,1432 1547,1370 1470,1460 1400,1480 B 37,1368 78,1420 130,1380 110,1440 160,1440 183,1452 150,1480 240,1500 225,1490 210,1500 50,1500 D 1190,75 1181,67 1200,80 1310,42 1330,60 1385,60 1360,80 1410,70 1440,60 1460,90 1492,0 1530,30 1512,75 1480,110 1500,110 1520,100 E 10,20 30,60 5,75 93,32 60,50 200,12 235,10 245,5 170,60 200,80 190,60 60,80 120,60 150,100 40,90 70,110 100,100 D 1295,124 1310,140 1254,220 1310,195 1327,188 1340,150 1430,130 1440,145 1450,160 1470,175 1430,210 1420,190 1393,185 E 95,160 95,190 125,130 125,225 160,145 160,205";
  let s = "A";
  const out = [];
  for (const t of src.split(" ")) {
    if (SHEETS[t]) s = t;
    else {
      const [x, y] = t.split(",").map(Number);
      out.push(at(s, x, y));
    }
  }
  return out;
})();
/* Pins in front show their dot; the crowded ones behind only show outlines. */
const PINS_FRONT = "A 609,1184 611,1247 705,1252 783,1361 862,1418 902,1472 1079,1317 1250,1358 1315,1345 1204,1445 1430,1403 B 37,1368 78,1420 130,1380 183,1452 A 1490,1492 B 200,1512 D 1512,75 1181,67 1295,124 1254,220 1327,188 E 93,32 160,145 D 1430,150 1393,185";

const LABELS = [
  ["A", 730, 996, 142, "Holbrook", "t"], ["A", 883, 1188, 312, "Burlington", "t"], ["A", 287, 525, 945, "Helvetia", "t"],
  ["B", 1228, 1555, 156, "Minnehaha", "t"], ["B", 842, 1280, 412, "Vancouver", "c"], ["B", 1330, 1568, 984, "Portland", "a"],
  ["B", 1000, 1572, 1048, "International Airport", "a"], ["C", 745, 1003, 354, "Mill Plain", "t"], ["C", 592, 840, 786, "Cascade", "t"],
  ["C", 583, 853, 855, "Park East", "t"], ["C", 1501, 0, 430, "Five Corners", "t"], ["C", 1100, 1420, 1492, "Interlachen", "t"],
  ["F", 1243, 1480, 158, "Fairview", "t"], ["F", 1236, 0, 632, "Gresham", "m"], ["E", 728, 1134, 360, "Portland", "p"],
  ["D", 1182, 1549, 792, "Beaverton", "m"], ["E", 15, 243, 1478, "Tigard", "m"], ["E", 128, 340, 1064, "Garden", "t"],
  ["E", 4, 462, 1132, "Home-Whitford", "t"], ["E", 1090, 1404, 1288, "Milwaukie", "t"], ["F", 392, 765, 1283, "Happy Valley", "t"],
  ["F", 253, 551, 1441, "Sunnyside", "t"], ["D", -12, 328, 1253, "Farmington", "t"],
  ["D", 558, 926, 139, "TANASBOURNE", "d"], ["D", 195, 621, 216, "ORENCO STATION", "d"], ["E", 601, 911, 178, "NORTHWEST", "d"],
  ["E", 643, 866, 231, "DISTRICT", "d"], ["E", 751, 1053, 459, "DOWNTOWN", "d"], ["E", 983, 1284, 964, "SELLWOOD -", "d"],
  ["E", 1002, 1281, 1018, "MORELAND", "d"], ["F", 28, 333, 385, "MONTAVILLA", "d"], ["F", 718, 1017, 538, "CENTENNIAL", "d"],
  ["B", 66, 374, 1375, "NORTHWEST", "d"], ["B", 95, 351, 1428, "PORTLAND", "d"],
];
const LABEL_STYLE = {
  t: { size: 24, cls: "fill-[#4d4429]" }, a: { size: 24, cls: "fill-[#3d3a36]" }, c: { size: 30, cls: "fill-[#3f3824]" },
  m: { size: 28, cls: "fill-[#3f3824]" }, p: { size: 37, cls: "fill-[#3f3824] font-medium" }, d: { size: 19, cls: "fill-[#9d8f6b] italic" },
};
const OVALS = [
  ["B", 1196, 636, "14", 32], ["C", 674, 918, "14", 32], ["C", 28, 246, "500", 40], ["C", 1190, 54, "500", 40], ["B", 1060, 1410, "99E", 40],
  ["D", 444, 624, "8", 32], ["D", 902, 692, "8", 32], ["E", 130, 653, "8", 32], ["E", 331, 769, "10", 32], ["D", 583, 1050, "10", 32],
  ["D", 1472, 659, "217", 40], ["D", 1469, 1260, "210", 40], ["E", 1132, 1370, "43", 32], ["E", 1469, 1428, "224", 40],
  ["F", 182, 94, "213", 40], ["F", 182, 884, "213", 40], ["D", 0, 1426, "219", 32],
];
const US = [["A", 517, 1421, "26", 36], ["A", 825, 22, "30", 36], ["B", 1205, 1207, "30B", 42], ["C", 490, 1427, "30B", 42], ["E", 595, 5, "30", 36], ["E", 415, 500, "26", 36], ["F", 140, 636, "26", 36], ["F", 1122, 690, "26", 36]];
const INTER = [["B", 923, 692, "5", 26], ["C", 450, 1014, "205", 46], ["C", 280, 1395, "205", 46], ["F", 339, 90, "84", 32], ["F", 294, 716, "205", 46], ["F", 240, 1245, "205", 46], ["E", 895, 537, "405", 46], ["E", 908, 785, "5", 26]];

const HILLS = (() => {
  let seed = 7;
  const r = () => ((seed = (seed * 16807) % 2147483647) / 2147483647);
  const out = [];
  const spots = [[215, 30, 90, 120, 55], [340, 150, 110, 70, 45], [70, 50, 140, 60, 28], [200, 200, 90, 70, 18], [640, 600, 60, 60, 26], [640, 690, 80, 60, 18], [1500, 820, 70, 60, 20], [1490, 650, 60, 60, 12], [1400, 900, 60, 60, 12], [140, 590, 50, 50, 10], [1510, 340, 60, 40, 12]];
  for (const [x, y, w, h, n] of spots)
    for (let i = 0; i < n; i++) {
      const cx = x + r() * w, cy = y + r() * h, a = 4 + r() * 12, b = 3 + r() * 8;
      out.push([`${cx},${cy} ${cx + a},${cy - b} ${cx + a * 1.4},${cy + b * 0.3} ${cx + a * 0.4},${cy + b}`, i % 3]);
    }
  return out;
})();

const Lines = ({ data, stroke, w }) =>
  data.map((d, i) => <polyline key={i} points={pts(d)} fill="none" stroke={stroke} strokeWidth={w} strokeLinejoin="round" strokeLinecap="butt" />);
const Areas = ({ data, fill }) => data.map((d, i) => <polygon key={i} points={pts(d)} fill={fill} />);

const Pin = ({ x, y, dot }) => (
  <g transform={`translate(${x} ${y})`}>
    <path d="M0 44 C-1 30 -5 23 -9 16 C-13 10 -17 7 -17 -1 A17 17 0 0 1 17 -1 C17 7 13 10 9 16 C5 23 1 30 0 44Z" fill="#6991fd" stroke="#10193a" strokeWidth="2.4" strokeLinejoin="round" />
    {dot && <circle r="5" fill="#05070f" />}
  </g>
);

const Oval = ({ s, x, y, t, w }) => {
  const [cx, cy] = at(s, x, y);
  return (
    <g transform={`translate(${cx} ${cy})`}>
      <rect x={-w / 2} y="-13" width={w} height="26" rx="12" fill="#fff" stroke="#666" strokeWidth="1.8" />
      <text y="6.5" textAnchor="middle" fontSize="18.5" fill="#333">{t}</text>
    </g>
  );
};
const UsShield = ({ s, x, y, t, w }) => {
  const [cx, cy] = at(s, x, y);
  const h = w / 2;
  return (
    <g transform={`translate(${cx} ${cy})`}>
      <path
        d={`M0 -15 Q${-h * 0.3} -11 ${-h * 0.6} -14 L${-h + 2} -15 L${-h - 0.5} -11 Q${-h + 4} -6 ${-h} 1 Q${-h - 1} 9 ${-h * 0.6} 12 Q${-h * 0.2} 12 0 15 Q${h * 0.2} 12 ${h * 0.6} 12 Q${h + 1} 9 ${h} 1 Q${h - 4} -6 ${h + 0.5} -11 L${h - 2} -15 L${h * 0.6} -14 Q${h * 0.3} -11 0 -15Z`}
        fill="#fff" stroke="#666" strokeWidth="1.8" strokeLinejoin="round"
      />
      <text y="7.5" textAnchor="middle" fontSize="18.5" fill="#333">{t}</text>
    </g>
  );
};
const Interstate = ({ s, x, y, t, w }) => {
  const [cx, cy] = at(s, x, y);
  const h = w / 2;
  return (
    <g transform={`translate(${cx} ${cy})`}>
      <path d={`M${-h} -8 Q${-h - 1} 4 ${-h * 0.65} 9 Q${-h * 0.3} 14 0 16 Q${h * 0.3} 14 ${h * 0.65} 9 Q${h + 1} 4 ${h} -8Z`} fill="#3a78c8" />
      <path d={`M${-h + 1} -15 Q${-h * 0.5} -12 0 -16 Q${h * 0.5} -12 ${h - 1} -15 L${h} -10 L${-h} -10Z`} fill="#d66260" />
      <rect x={-h} y="-10" width={w} height="2" fill="#fff" />
      <text y="8.5" textAnchor="middle" fontSize="18" className="font-bold" fill="#fff">{t}</text>
    </g>
  );
};

function MapCanvas() {
  const front = [];
  let sh = "A";
  PINS_FRONT.split(" ").forEach((t) => {
    if (SHEETS[t]) sh = t;
    else front.push(at(sh, ...t.split(",").map(Number)));
  });
  const red = at("A", 1330, 1443);
  const solo = at("F", 950, 539);
  const plane = at("C", 50, 994);
  return (
    <svg width="1598" height="1000" viewBox="0 0 1598 1000" className="block [font-family:Roboto,sans-serif]">
      <defs>
        <linearGradient id="redpin" x1="0" y1="0" x2="0" y2="1">
          <stop offset="0" stopColor="#fd7b6e" />
          <stop offset="1" stopColor="#f3352a" />
        </linearGradient>
        <path id="river1" d={`M${at("B", 499, 550).join(" ")} Q${at("B", 640, 672).join(" ")} ${at("B", 852, 754).join(" ")}`} />
        <path id="river2" d={`M${at("B", 1423, 800).join(" ")} Q${at("B", 1568, 852).join(" ")} ${at("C", 235, 878).join(" ")}`} />
        <path id="river3" d={`M${at("C", 483, 1192).join(" ")} Q${at("C", 640, 1285).join(" ")} ${at("C", 865, 1322).join(" ")}`} />
      </defs>
      <rect width="1598" height="1000" fill="#f0ede4" />
      <Areas data={URBAN} fill="#e8e4dc" />
      <Areas data={RURAL} fill="#f0ede4" />
      <Areas data={SHADE} fill="#dfdad2" />
      {HILLS.map(([p, k], i) => <polygon key={i} points={p} fill={["#e6e3da", "#f3f0e8", "#e3e0d7"][k]} opacity="0.8" />)}
      <Areas data={PARKS} fill="#c9dfaa" />
      <Areas data={GREEN2} fill="#c3dac5" />
      {PATCHES.map(([f, d], i) => <polygon key={i} points={pts(d)} fill={f} />)}
      <Lines data={RUNWAYS} stroke="#d3c9be" w={7} />
      <Areas data={WATER} fill="#97bdfd" />
      {ISLANDS.map(([f, d], i) => <polygon key={i} points={pts(d)} fill={f} />)}
      <Lines data={STREAMS} stroke="#91b9fe" w={11} />
      <Lines data={CREEKS} stroke="#91b9fe" w={2.4} />
      <Lines data={LOCAL} stroke="#cdc8bb" w={1.6} />
      <Lines data={RAIL} stroke="#bfbfbf" w={1.6} />
      <polyline points={pts(BORDER)} fill="none" stroke="#9a9a9a" strokeWidth="1.8" strokeDasharray="18 9" />
      <Lines data={WHITE} stroke="#cbc5b8" w={6.4} />
      <Lines data={WHITE} stroke="#ffffff" w={4.2} />
      <Lines data={YELLOW} stroke="#e6b94f" w={6.8} />
      <Lines data={YELLOW} stroke="#ffdf69" w={4.2} />
      <Lines data={ORANGE} stroke="#e6920f" w={8.4} />
      <Lines data={ORANGE} stroke="#fc9f26" w={5.4} />
      {["river1", "river2", "river3"].map((id) => (
        <text key={id} fontSize="21" className="italic" fill="#4d73a8" stroke="#ffffff" strokeOpacity="0.45" strokeWidth="3" paintOrder="stroke">
          <textPath href={"#" + id} textLength={id === "river1" ? 137 : id === "river2" ? 131 : 133}>Columbia River</textPath>
        </text>
      ))}
      {LABELS.map(([s, x0, x1, y, t, k], i) => {
        const [x, by] = at(s, x0, y);
        const len = x1 ? (x1 - x0) / SHEETS[s][2] : undefined;
        return (
          <text key={i} x={x} y={by} textLength={len} lengthAdjust="spacingAndGlyphs" fontSize={LABEL_STYLE[k].size} className={LABEL_STYLE[k].cls} stroke="#f6f4ee" strokeOpacity="0.75" strokeWidth="5" strokeLinejoin="round" paintOrder="stroke">
            {t}
          </text>
        );
      })}
      {OVALS.map(([s, x, y, t, w], i) => <Oval key={i} s={s} x={x} y={y} t={t} w={w} />)}
      {US.map(([s, x, y, t, w], i) => <UsShield key={i} s={s} x={x} y={y} t={t} w={w} />)}
      {INTER.map(([s, x, y, t, w], i) => <Interstate key={i} s={s} x={x} y={y} t={t} w={w} />)}
      {[at("B", 1205, 1122), at("C", 490, 1341)].map(([x, y], i) => (
        <g key={i} transform={`translate(${x} ${y})`}>
          <rect x="-19" y="-8" width="38" height="16" fill="#fff" stroke="#666" strokeWidth="1.6" />
          <text y="5" textAnchor="middle" fontSize="13" fill="#333" stroke="#333" strokeWidth="0.3">BYP</text>
        </g>
      ))}
      <g transform={`translate(${plane[0]} ${plane[1]})`}>
        <circle r="13" fill="#fff" stroke="#c9c9c9" />
        <path d="M0 -9 Q1.5 -9 1.5 -6 V-2.5 L9 2.5 V4.5 L1.5 2 V6 L4 8 V9.5 L0 8.5 L-4 9.5 V8 L-1.5 6 V2 L-9 4.5 V2.5 L-1.5 -2.5 V-6 Q-1.5 -9 0 -9Z" fill="#1aa5f0" />
      </g>
      {PINS.map(([x, y], i) => <Pin key={i} x={x} y={y} dot={i % 9 === 4} />)}
      {front.map(([x, y], i) => <Pin key={i} x={x} y={y} dot />)}
      <Pin x={solo[0]} y={solo[1]} dot />
      <g transform={`translate(${red[0]} ${red[1]})`}>
        <path d="M0 58 C-1 38 -6 28 -12 19 C-18 12 -21.5 8 -21.5 0 A21.5 21.5 0 0 1 21.5 0 C21.5 8 18 12 12 19 C6 28 1 38 0 58Z" fill="url(#redpin)" stroke="#b3362e" strokeWidth="1.4" />
        <circle r="7.5" fill="#5e100f" />
      </g>
      <circle cx={at("F", 190, 1495)[0]} cy={at("F", 190, 1495)[1]} r="17" fill="#6991fd" stroke="#10193a" strokeWidth="2" />
      <circle cx={at("F", 190, 1495)[0]} cy={at("F", 190, 1495)[1]} r="5" fill="#05070f" />
      <text x="13" y="985.5" fontSize="41" textLength="124" lengthAdjust="spacingAndGlyphs" className="font-semibold [font-family:Lato,sans-serif]" stroke="#fff" strokeOpacity="0.8" strokeWidth="5" strokeLinejoin="round" paintOrder="stroke">
        <tspan fill="#4285f4">G</tspan><tspan fill="#ea4335">o</tspan><tspan fill="#fbbc05">o</tspan><tspan fill="#4285f4">g</tspan><tspan fill="#34a853">l</tspan><tspan fill="#ea4335">e</tspan>
      </text>
    </svg>
  );
}

function InfoWindow() {
  return (
    <div className="absolute left-[248px] top-[210px] h-[206px] w-[526px] rounded-[4px] bg-white shadow-[0_2px_10px_rgba(0,0,0,0.45)]">
      <svg className="absolute left-[240px] top-[205px]" width="48" height="44" viewBox="0 0 48 44">
        <path d="M6 1 L24 43 L41 1Z" fill="#fff" />
      </svg>
      <div className="pl-[51px] pt-[17px] text-[#333] [-webkit-text-stroke:0.9px_#333]">
        <div className="text-[28px] leading-[30px] tracking-[0.08px]">2528 NW 108th Ter</div>
        <div className="text-[28px] leading-[30px] tracking-[0.25px]">Portland, OR 97229</div>
        <div className="-mt-[1px] whitespace-nowrap text-[24px] leading-[26px] tracking-[0.24px]">Sale Date: Wednesday, May 11th 2016</div>
        <div className="text-[24px] leading-[26px] tracking-[0.15px]">Sale Price: $659950</div>
        <div className="text-[24px] leading-[26px] tracking-[0.3px]">Year Built: 2015</div>
        <div className="text-[24px] leading-[26px] tracking-[0.3px]">Beds: 4, Baths: 4</div>
      </div>
      <svg className="absolute right-[25px] top-[21px]" width="20" height="20" viewBox="0 0 20 20">
        <path d="M2 2 L18 18 M18 2 L2 18" stroke="#aaa" strokeWidth="4" />
      </svg>
    </div>
  );
}

function MapControls() {
  const ctl = "absolute rounded-[4px] bg-white shadow-[0_2px_8px_rgba(0,0,0,0.3)]";
  return (
    <div className="[font-family:Roboto,sans-serif]">
      <div className={`${ctl} left-5 top-5 flex h-[62px] w-[186px] items-center text-[22px]`}>
        <div className="flex h-full w-[76px] items-center justify-center border-r border-[#e4e4e4] pb-[2px] font-medium text-black">Map</div>
        <div className="flex-1 pb-[2px] text-center text-[#565656]">Satellite</div>
      </div>
      <div className={`${ctl} left-[1522px] top-[766px] flex h-14 w-14 items-center justify-center pb-1`}>
        <svg width="24" height="40" viewBox="0 0 24 40">
          <path d="M6 13 Q12 10 18 13 L23 28 L20 30 L17 24 V39 H7 V24 L4 30 L1 28Z" fill="#fbb829" stroke="#8a6a1c" strokeWidth="1" />
          <path d="M8 14 L12 20 L16 14Z" fill="#e5821e" />
          <path d="M12 27 V38" stroke="#c98a17" strokeWidth="1.4" />
          <circle cx="12" cy="7.5" r="6.5" fill="#fbb829" stroke="#8a6a1c" strokeWidth="1" />
        </svg>
      </div>
      <div className={`${ctl} left-[1522px] top-[842px] flex h-[110px] w-14 flex-col items-center`}>
        <svg className="mt-[17px] ml-[2px]" width="20" height="20" viewBox="0 0 20 20"><path d="M10 0 V20 M0 10 H20" stroke="#666" strokeWidth="5.4" /></svg>
        <div className="mt-[17px] h-[2px] w-10 bg-[#e6e6e6]" />
        <div className="mt-[24px] ml-[2px] h-[6px] w-5 bg-[#666]" />
      </div>
      <div className="absolute bottom-0 right-0 flex h-7 items-center gap-6 bg-[#f5f5f5]/70 pl-2.5 pr-[13px] text-[20px] leading-7 text-[#444] [-webkit-text-stroke:0.3px_#444]">
        <span className="-mt-[2px]">Map data ©2016 Google</span>
        <span className="-mt-[2px]">Terms of Use</span>
        <span className="-mt-[2px]">Report a map error</span>
      </div>
    </div>
  );
}

function Logo() {
  return (
    <svg width="190" height="124" viewBox="0 0 190 124" className="shrink-0">
      <defs>
        <linearGradient id="brand" gradientUnits="userSpaceOnUse" x1="0" y1="42" x2="0" y2="84">
          <stop offset="0" stopColor="#0a93c6" />
          <stop offset="0.35" stopColor="#0a6fb0" />
          <stop offset="0.7" stopColor="#263f86" />
          <stop offset="1" stopColor="#283a7c" />
        </linearGradient>
      </defs>
      <g transform="translate(0 72) skewX(-12)">
        <g transform="translate(0 -72)">
          <text x="19" y="72" fontSize="44" textLength="139" lengthAdjust="spacingAndGlyphs" className="font-bold italic [font-family:Lato,sans-serif]" fill="url(#brand)">zeppidy</text>
        </g>
      </g>
      <circle cx="119" cy="42" r="7" fill="#fff" />
      <circle cx="120.5" cy="45" r="5" fill="#f04a2d" />
      <circle cx="169.5" cy="53.5" r="2" fill="none" stroke="#3f8fc0" strokeWidth="1" />
      <text x="153" y="92" fontSize="18" textLength="35" lengthAdjust="spacingAndGlyphs" className="italic [font-family:'Open_Sans',sans-serif]" fill="#777">Beta</text>
    </svg>
  );
}

function Header() {
  return (
    <header className="flex h-[126px] w-full items-stretch border-b-2 border-[#ddd] bg-white text-[33px] tracking-[-0.35px] text-[#555]">
      <div className="w-[290px] border-r-2 border-[#ddd] tracking-normal"><Logo /></div>
      <div className="flex w-[180px] items-center border-r-2 border-[#ddd] pl-4 pt-1">
        <span className="w-[116px] tracking-normal">Filters</span>
        <svg width="20" height="12" viewBox="0 0 20 12" className="mt-1"><path d="M0 0 H20 L10 12Z" fill="#828282" /></svg>
      </div>
      <div className="flex flex-1 items-center justify-between pl-[20px] pr-[25px] text-[44px] tracking-[-0.3px] text-[#9b9b9b]">
        <span className="-mt-[1px]">Address, City, Neighborhood, Schools, etc...</span>
        <svg width="50" height="50" viewBox="0 0 50 50" className="-mt-[2px]">
          <circle cx="25" cy="25" r="25" fill="#828282" />
          <path d="M14.5 14.5 L35.5 35.5 M35.5 14.5 L14.5 35.5" stroke="#fff" strokeWidth="5.5" />
        </svg>
      </div>
      <div className="w-[128px] border-r-2 border-[#ddd] bg-[#e9e9e9]">
        <svg width="126" height="124" viewBox="0 0 126 124">
          <circle cx="54" cy="52" r="19.5" fill="none" stroke="#828282" strokeWidth="7" />
          <path d="M69 67 L71 70 L91 88" fill="none" stroke="#828282" strokeWidth="8" />
        </svg>
      </div>
      <div className="flex w-[262px] items-center border-r-2 border-[#ddd] pl-5 pb-1 tracking-[-0.6px]">
        <svg width="33" height="32" viewBox="0 0 33 32" className="mt-2">
          <path d="M9 9 H2 V29 H31 V9 H24" fill="none" stroke="#828282" strokeWidth="3" />
          <path d="M16.5 0 V16" stroke="#828282" strokeWidth="3" />
          <path d="M10 14 H23 L16.5 22Z" fill="#828282" />
        </svg>
        <span className="ml-5 whitespace-nowrap">Save Search</span>
      </div>
      <div className="flex w-[148px] items-center justify-center whitespace-nowrap border-r-2 border-[#ddd] pb-1 tracking-[-0.6px]">Sign Up</div>
      <div className="flex w-[120px] items-center whitespace-nowrap pb-1 pl-5 tracking-[-0.5px]">Log In</div>
    </header>
  );
}

function SectionHeader({ title, open }) {
  return (
    <div className="flex h-[90px] w-full items-start justify-between rounded-[5px] border-2 border-[#ddd] bg-[#f9f9f9] pl-[28px] pr-[30px] text-[#555]">
      <h2 className={open ? "pt-[2px] text-[43px] leading-[80px]" : "pt-[2px] text-[43px] leading-[80px] tracking-[-0.4px]"}>{title}</h2>
      <svg width="48" height="48" viewBox="0 0 48 48" className="mt-3">
        <rect x="2" y="2" width="44" height="44" fill="none" stroke="#828282" strokeWidth="4" />
        <path d={open ? "M12 24 H36" : "M12 24 H36 M24 12 V36"} stroke="#828282" strokeWidth="4" />
      </svg>
    </div>
  );
}

function Select({ label, value, disabled }) {
  return (
    <div className="h-[120px] w-[424px] [font-family:Roboto,sans-serif]">
      <div className={disabled ? "-ml-[1px] text-[24px] leading-7 text-[#c6c6c6]" : "-ml-[1px] text-[24px] leading-7 text-[#555]"}>{label}</div>
      <div className="flex h-[52px] items-center justify-between pr-3.5 pt-[1px]">
        <span className={disabled ? "-ml-[1px] text-[32px] tracking-[-0.2px] text-[#b4b4b4]" : "-ml-[1px] text-[32px] tracking-[-0.2px] text-[#212121]"}>{value}</span>
        <svg width="20" height="10" viewBox="0 0 20 10" className="mt-1"><path d="M0 0 H20 L10 10Z" fill={disabled ? "#dcdcdc" : "#999"} /></svg>
      </div>
      <div className={disabled ? "h-[2px] bg-[repeating-linear-gradient(90deg,#bdbdbd_0_6px,transparent_6px_12px)]" : "h-[2px] bg-[#555]"} />
    </div>
  );
}

const TABS = ["Market Trends at a Glance", "Location's Map of Sales", "Number Sold & Average Price", "Sales Prices & Days on Market", "Sales Price/List Price Ratio"];

function Tab({ label, active }) {
  const base = "flex h-24 w-[460px] items-center rounded-lg pl-[30px] pt-[2px] text-[28px] font-bold shadow-[2px_3px_6px_#8a8a8a,inset_0_0_5px_#777] [font-family:Roboto,sans-serif] ";
  return <button className={base + (active ? "bg-[#12367d] text-white" : "bg-white text-[#12367d]")}>{label}</button>;
}

const FOOTER = [["LEARN MORE", "Home", "Agents"], ["SUPPORT", "Contact"], ["COMPANY", "Jobs", "News"], ["LEGAL", "Terms of Use", "Privacy Policy"]];

export default function App() {
  return (
    <div className="relative flex h-[1958px] w-[2570px] flex-col overflow-hidden bg-white [font-family:Lato,sans-serif]">
      <Header />
      <main className="ml-[178px] flex w-[2280px] flex-col">
        <div className="flex h-3 items-end justify-end overflow-hidden border-x-2 border-b-2 border-[#ddd] pr-[62px] text-[22px] leading-none text-[#333] [font-family:'Liberation_Sans',sans-serif] [-webkit-text-stroke:0.8px_#333]">
          <span className="mb-[3px]">Source: Google</span>
        </div>
        <div className="h-1" />
        <SectionHeader title="Market Trends" open />
        <section className="flex h-[1302px] border-x-2 border-b-2 border-[#ddd]">
          <div className="w-[646px] pl-[30px] pt-6">
            <Select label="Filter results by..." value="97229" />
            <Select label="Filter results by..." value="Month" disabled />
            <div className="ml-[6px] mt-[2px] flex flex-col gap-2.5">
              {TABS.map((t, i) => <Tab key={t} label={t} active={i === 1} />)}
            </div>
          </div>
          <div className="w-[1598px] text-center text-[#555] [font-family:'Liberation_Sans',sans-serif]">
            <h3 className="pt-[42px] text-[48.5px] font-bold leading-[56px]">Most Recent Sales</h3>
            <h4 className="pt-[26px] text-[36.2px] font-bold leading-[40px]">The 200 most recent sales in 97229 zip-code</h4>
            <div className="relative mt-[98px] h-[1000px] w-[1598px] overflow-hidden text-left">
              <MapCanvas />
              <InfoWindow />
              <MapControls />
            </div>
          </div>
        </section>
        <div className="h-1" />
        <SectionHeader title="Calculate Payment" />
      </main>
      <footer className="flex-1 bg-[#202020] pl-[180px] pt-[125px] text-[#9b9b9b]">
        <div className="grid grid-cols-[565px_564px_565px_564px]">
          {FOOTER.map(([h, ...links]) => (
            <div key={h} className="w-[520px]">
              <h5 className="h-[70px] text-[24px] leading-[32px] tracking-[3.9px]">{h}</h5>
              {links.map((l) => (
                <div key={l} className="flex h-[94px] items-center border-b-2 border-[#1c1c1c] pt-1 text-[32.5px] tracking-[-0.1px]">{l}</div>
              ))}
            </div>
          ))}
        </div>
      </footer>
      <button className="absolute left-[2318px] top-[1850px] flex h-[92px] w-[214px] items-center rounded-full bg-[#0069a6] pb-[2px] pl-11 text-[32px] font-black text-white">
        <svg width="40" height="40" viewBox="0 0 40 40" className="-mt-[2px] mr-[17px]">
          <circle cx="20" cy="20" r="18" fill="none" stroke="#fff" strokeWidth="3.6" />
          <path d="M14.5 15.5 Q15 10.5 20.3 10.5 Q26 11 25.5 16 Q25 18.5 22 20.5 Q20 22 20 24.5" fill="none" stroke="#fff" strokeWidth="3.4" />
          <circle cx="20" cy="29.5" r="2.2" fill="#fff" />
        </svg>
        Help
      </button>
    </div>
  );
}
